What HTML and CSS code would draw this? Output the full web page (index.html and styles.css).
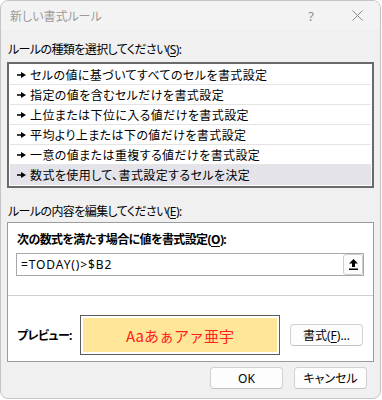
FILE: index.html
```html
<!DOCTYPE html>
<html lang="ja">
<head>
<meta charset="utf-8">
<link rel="stylesheet" href="styles.css">
</head>
<body>
<div class="win">
  <div class="titlebar">
    <span class="title">新しい書式ルール</span>
    <span class="tbtn help">?</span>
    <span class="tbtn close"><svg width="11" height="11" viewBox="0 0 11 11"><path d="M0.5 0.5L10.5 10.5M10.5 0.5L0.5 10.5" stroke="#8c8c8c" stroke-width="1" fill="none"/></svg></span>
  </div>
  <div class="content">
    <div class="label l1">ルールの種類を選択してください(<u>S</u>):</div>
    <div class="list">
      <div class="row"><svg class="arr" width="9" height="6" viewBox="0 0 9 6"><rect x="0" y="2.25" width="5" height="1.5" fill="#000"/><polygon points="4,0 9,3 4,6" fill="#000"/></svg><span>セルの値に基づいてすべてのセルを書式設定</span></div>
      <div class="row"><svg class="arr" width="9" height="6" viewBox="0 0 9 6"><rect x="0" y="2.25" width="5" height="1.5" fill="#000"/><polygon points="4,0 9,3 4,6" fill="#000"/></svg><span>指定の値を含むセルだけを書式設定</span></div>
      <div class="row"><svg class="arr" width="9" height="6" viewBox="0 0 9 6"><rect x="0" y="2.25" width="5" height="1.5" fill="#000"/><polygon points="4,0 9,3 4,6" fill="#000"/></svg><span>上位または下位に入る値だけを書式設定</span></div>
      <div class="row"><svg class="arr" width="9" height="6" viewBox="0 0 9 6"><rect x="0" y="2.25" width="5" height="1.5" fill="#000"/><polygon points="4,0 9,3 4,6" fill="#000"/></svg><span>平均より上または下の値だけを書式設定</span></div>
      <div class="row"><svg class="arr" width="9" height="6" viewBox="0 0 9 6"><rect x="0" y="2.25" width="5" height="1.5" fill="#000"/><polygon points="4,0 9,3 4,6" fill="#000"/></svg><span>一意の値または重複する値だけを書式設定</span></div>
      <div class="row sel"><svg class="arr" width="9" height="6" viewBox="0 0 9 6"><rect x="0" y="2.25" width="5" height="1.5" fill="#000"/><polygon points="4,0 9,3 4,6" fill="#000"/></svg><span>数式を使用して、書式設定するセルを決定</span></div>
    </div>
    <div class="label l2">ルールの内容を編集してください(<u>E</u>):</div>
    <div class="frame">
      <div class="ftop">
        <div class="blabel">次の数式を満たす場合に値を書式設定(<u>O</u>):</div>
        <div class="input">
          <span class="val">=TODAY()&gt;$B2</span>
          <span class="ref"><svg width="9" height="11" viewBox="0 0 9 11"><polygon points="4.5,0 9,4.5 6,4.5 6,8 3,8 3,4.5 0,4.5" fill="#000"/><rect x="0" y="9.5" width="9" height="1.5" fill="#000"/></svg></span>
        </div>
      </div>
      <div class="fbottom">
        <div class="prow">
          <div class="plabel">プレビュー:</div>
          <div class="preview"><div class="fill">Aaあぁアァ亜宇</div></div>
          <span class="btn fmt">書式(<u>F</u>)...</span>
        </div>
      </div>
    </div>
    <div class="actions">
      <span class="btn">OK</span>
      <span class="btn">キャンセル</span>
    </div>
  </div>
</div>
</body>
</html>
```
FILE: styles.css
```css
* { box-sizing: border-box; margin: 0; padding: 0; }
html, body { background: #ffffff; }
body {
  font-family: "Noto Sans", "Noto Sans CJK JP", sans-serif;
  font-size: 12px;
  color: #000;
  font-feature-settings: "palt";
}
u { text-underline-offset: 2px; }
.win {
  width: 381px;
  height: 399px;
  border: 1px solid #c4c4c4;
  border-radius: 8px;
  background: #f0f0f0;
  overflow: hidden;
  display: flex;
  flex-direction: column;
}
.titlebar {
  height: 29px;
  background: #f3f3f3;
  display: flex;
  align-items: center;
  padding-left: 9px;
  color: #9b9b9b;
  flex: none;
}
.title { flex: 1; font-size: 12px; }
.tbtn {
  width: 46px;
  height: 29px;
  display: flex;
  align-items: center;
  justify-content: center;
}
.help { font-size: 13px; color: #8c8c8c; }
.content { padding: 0 6px; display: flex; flex-direction: column; }
.label { line-height: 16px; height: 16px; padding-left: 1px; letter-spacing: -0.6px; }
.l1 { margin-top: 12px; }
.l2 { margin-top: 16px; }
.list {
  margin-top: 4px;
  height: 126px;
  border: 2px solid #6a6a6a;
  padding: 1px;
  background: #fff;
}
.row {
  height: 20px;
  border-bottom: 1px solid #e4e4e4;
  display: flex;
  align-items: center;
  padding-left: 7px;
  padding-top: 1px;
  letter-spacing: 0.4px;
}
.row.sel { background: #e3e3e9; border-bottom-color: #e3e3e9; }
.arr { flex: none; margin-right: 4px; margin-top: -1px; }
.frame {
  margin-top: 2px;
  height: 140px;
  border: 1px solid #9c9c9c;
  background: #fff;
  display: flex;
  flex-direction: column;
}
.ftop {
  height: 73px;
  border-bottom: 1px solid #cfcfcf;
  padding: 9px 9px 0 8px;
}
.blabel { font-weight: bold; line-height: 16px; padding-left: 1px; letter-spacing: -0.6px; }
.input {
  margin-top: 5px;
  height: 23px;
  border: 1px solid #a8a8a8;
  display: flex;
  align-items: center;
  justify-content: space-between;
  padding: 0 0 0 4px;
}
.val { letter-spacing: 0.9px; }
.ref {
  width: 20px;
  height: 21px;
  border: 1px solid #cdcdcd;
  border-radius: 3px;
  background: #fdfdfd;
  display: flex;
  align-items: center;
  justify-content: center;
}
.fbottom { padding: 19px 10px 0 9px; }
.prow { display: flex; align-items: center; height: 40px; }
.plabel { width: 63px; font-weight: bold; letter-spacing: -0.6px; }
.preview {
  width: 200px;
  height: 40px;
  border: 1px solid #5c5c5c;
  padding: 2px;
  background: #fff;
}
.fill {
  height: 100%;
  background: #ffe699;
  color: #ff2020;
  font-family: "Noto Sans CJK JP", sans-serif;
  font-feature-settings: normal;
  font-size: 15px;
  display: flex;
  align-items: center;
  justify-content: center;
}
.btn {
  width: 73px;
  height: 22px;
  border: 1px solid #d1d1d1;
  border-bottom-color: #c2c2c2;
  border-radius: 4px;
  background: #fdfdfd;
  display: flex;
  align-items: center;
  justify-content: center;
}
.fmt { margin-left: 10px; }
.actions {
  display: flex;
  justify-content: flex-end;
  gap: 11px;
  margin-top: 5px;
  padding-right: 7px;
}
```
